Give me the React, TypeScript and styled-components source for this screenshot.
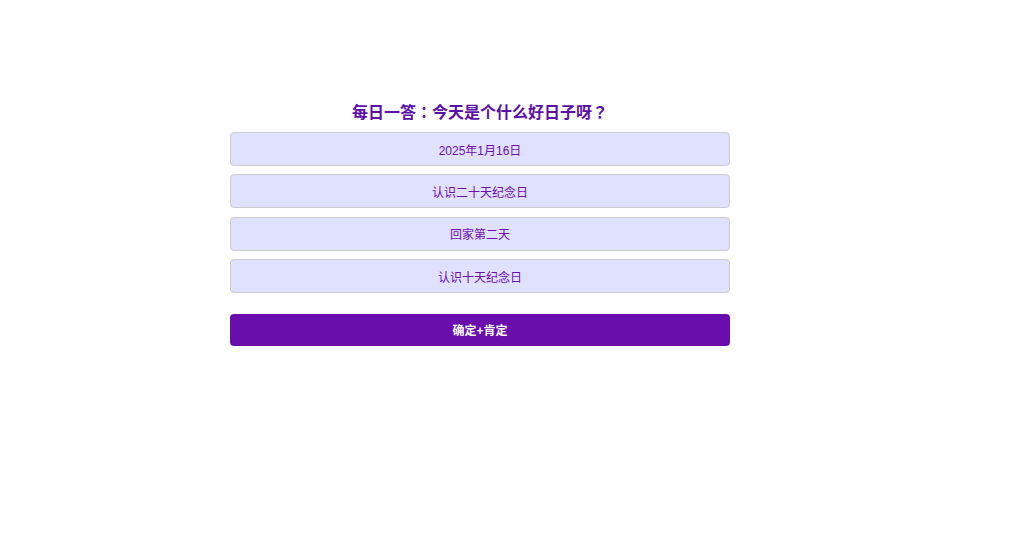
import React, { useState } from 'react'
import styled, { createGlobalStyle } from 'styled-components'

const GlobalStyle = createGlobalStyle`
  html, body {
    margin: 0;
    padding: 0;
    background: #ffffff;
  }

  body {
    font-family: 'Liberation Sans', 'Noto Sans CJK SC', sans-serif;
  }
`

const Page = styled.div`
  display: flex;
  padding: 100px 0 0 230px;
`

const Quiz = styled.div`
  display: flex;
  flex-direction: column;
  width: 500px;
`

const Title = styled.h2`
  margin: 0 0 9px;
  font-family: 'Noto Sans CJK TC', 'Noto Sans CJK SC', sans-serif;
  font-size: 16px;
  line-height: 23px;
  font-weight: bold;
  text-align: center;
  color: #5c0fa6;
`

const Options = styled.ul`
  display: flex;
  flex-direction: column;
  gap: 8.4px;
  margin: 0;
  padding: 0;
  list-style: none;
`

const Option = styled.li<{ $selected: boolean }>`
  box-sizing: border-box;
  height: 34px;
  display: flex;
  align-items: center;
  justify-content: center;
  font-size: 12px;
  color: #6a0dad;
  background-color: ${({ $selected }) => ($selected ? '#cfc7ff' : '#e0e0ff')};
  border: 1px solid #cccccc;
  border-radius: 4px;
  cursor: pointer;
`

const Submit = styled.button`
  box-sizing: border-box;
  margin-top: 20.5px;
  height: 32px;
  width: 100%;
  border: none;
  border-radius: 4px;
  background-color: #6a0dad;
  color: #ffffff;
  font-family: inherit;
  font-size: 12px;
  font-weight: bold;
  cursor: pointer;
`

const options = ['2025年1月16日', '认识二十天纪念日', '回家第二天', '认识十天纪念日']

const App = () => {
  const [selected, setSelected] = useState<number | null>(null)

  return (
    <>
      <GlobalStyle />
      <Page>
        <Quiz>
          <Title>每日一答：今天是个什么好日子呀？</Title>
          <Options>
            {options.map((text, i) => (
              <Option key={text} $selected={selected === i} onClick={() => setSelected(i)}>
                {text}
              </Option>
            ))}
          </Options>
          <Submit>确定+肯定</Submit>
        </Quiz>
      </Page>
    </>
  )
}

export default App
